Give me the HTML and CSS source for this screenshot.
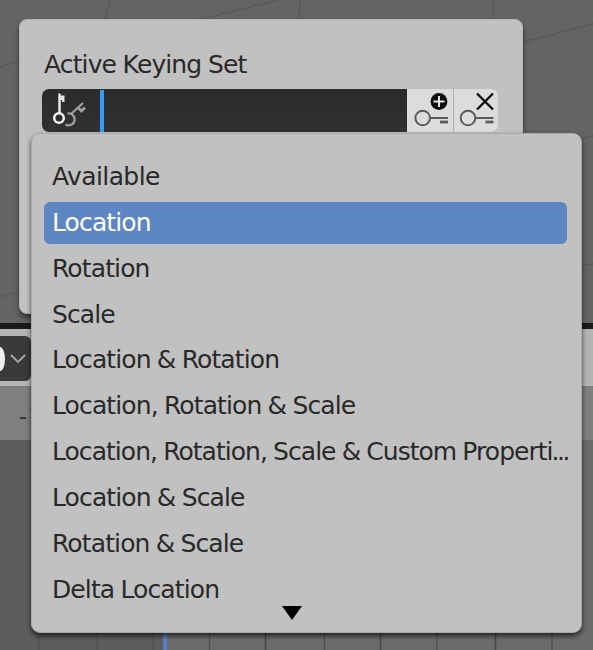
FILE: index.html
```html
<!DOCTYPE html>
<html lang="en">
<head>
<meta charset="utf-8">
<title>Active Keying Set</title>
<link rel="stylesheet" href="styles.css">
</head>
<body>
<div class="editor">
  <div class="viewport">
    <svg width="593" height="323" viewBox="0 0 593 323" fill="none" stroke="#595959" stroke-width="1.3">
      <path d="M110 0L105 20M278 0L198 20M300 0L299 20M493 0V20M0 67L20 61M523 42L593 24M581 139L593 136M581 266L593 264M0 297L20 291"/>
    </svg>
  </div>
  <div class="header">
    <div class="header-field"><span class="toggle"></span>
      <svg class="chevron" width="16" height="12" viewBox="0 0 16 12" fill="none" stroke="#a6a6a6" stroke-width="1.8"><path d="M1 2L8 9L15 2"/></svg>
    </div>
  </div>
  <div class="ruler"><span>-10</span></div>
  <div class="timeline">
    <svg width="593" height="210" viewBox="0 0 593 210">
      <path fill="#5d5d5d" d="M0 0H163V210H0z"/>
      <path stroke="#505050" stroke-width="1.3" d="M38.500 0V210M97 0V210M153.500 0V210M209.500 0V210M324.500 0V210M437 0V210M552 0V210"/>
      <path stroke="#484848" stroke-width="1.5" d="M265.500 0V210M380.500 0V210M495.500 0V210"/>
      <path fill="#5680c2" d="M163 0H167V210H163z"/>
    </svg>
  </div>
</div>

<section class="panel">
  <h1 class="panel-title">Active Keying Set</h1>
  <div class="search-row">
    <div class="search">
      <svg width="38" height="43" viewBox="0 0 38 43" fill="none">
        <path d="M25.500 24.500A6 6 0 1 1 23.500 35.500M29.500 24.500L41 14" stroke="#a0a0a0" stroke-width="2.200"/>
        <path d="M36 18.500L39.500 22L43 18.500" stroke="#a0a0a0" stroke-width="2.800"/>
        <circle cx="17" cy="29" r="4.800" stroke="#f1f1f1" stroke-width="2.500"/>
        <path d="M17.500 24.500V4.500" stroke="#f1f1f1" stroke-width="2.400"/>
        <path d="M18 6.500H22.500V13H20V11H18z" fill="#e4e4e4"/>
      </svg>
      <span class="caret"></span>
    </div>
    <button class="tool" aria-label="Add keying set">
      <svg width="46" height="43" viewBox="0 0 46 43" fill="none">
        <circle cx="32" cy="12.500" r="8.400" fill="#0b0b0b"/><path d="M26.500 12.500H37.500M32 7V18" stroke="#e8e8e8" stroke-width="2"/>
        <g stroke="#5a5a5a" stroke-width="2"><circle cx="15.700" cy="29" r="7.300"/><path d="M23 29H41"/><path d="M33 33H41" stroke-width="2.800"/></g>
      </svg>
    </button>
    <button class="tool tool-last" aria-label="Remove keying set">
      <svg width="45" height="43" viewBox="0 0 45 43" fill="none">
        <path d="M23 4.500L39 20.500M39 4.500L23 20.500" stroke="#111" stroke-width="2.400"/>
        <g stroke="#5a5a5a" stroke-width="2"><circle cx="14" cy="29" r="7.300"/><path d="M21.500 29H39.500"/><path d="M31.500 33H39.500" stroke-width="2.800"/></g>
      </svg>
    </button>
  </div>
</section>

<ul class="menu">
  <li>Available</li>
  <li class="selected">Location</li>
  <li>Rotation</li>
  <li>Scale</li>
  <li>Location &amp; Rotation</li>
  <li>Location, Rotation &amp; Scale</li>
  <li class="long">Location, Rotation, Scale &amp; Custom Properti<span class="dots">...</span></li>
  <li>Location &amp; Scale</li>
  <li>Rotation &amp; Scale</li>
  <li>Delta Location</li>
  <li class="more"><svg width="20" height="14" viewBox="0 0 20 14"><path d="M0 0H20L10 14z"/></svg></li>
</ul>
</body>
</html>
```
FILE: styles.css
```css
* { box-sizing: border-box; }
body {
  margin: 0;
  width: 593px;
  height: 650px;
  overflow: hidden;
  position: relative;
  font-family: "DejaVu Sans", sans-serif;
  font-size: 25px;
  letter-spacing: -0.88px;
  word-spacing: -0.9px;
  color: #292929;
}
svg { display: block; flex: none; }
.editor {
  display: grid;
  grid-template-rows: 323px 63px 54px 210px;
  height: 650px;
}
.viewport { background: #646464; overflow: hidden; }
.header {
  background: #b4b4b4;
  border-top: 6px solid #1a1a1a;
  padding-top: 7px;
}
.header-field {
  display: flex;
  align-items: center;
  gap: 5px;
  width: 31px;
  height: 45px;
  background: #3a3a3a;
  border-radius: 0 6px 6px 0;
}
.toggle {
  flex: none;
  width: 5px;
  height: 24px;
  background: #eee;
  border-radius: 0 5px 5px 0 / 0 12px 12px 0;
}
.ruler {
  background: #7f7f7f;
  padding: 16px 0 0 19px;
  font-size: 22px;
  line-height: 30px;
  letter-spacing: 1px;
}
.timeline { background: #6b6b6b; }
.panel {
  position: absolute;
  left: 19px;
  top: 19px;
  width: 504px;
  height: 295px;
  padding: 29px 24px 0;
  background: #c1c1c1;
  border: 1px solid #b3b3b3;
  border-radius: 8px;
  box-shadow: 0 4px 5px rgba(0, 0, 0, .5);
}
.panel-title {
  margin: 0 0 8px;
  font-size: 25px;
  font-weight: 400;
  line-height: 32px;
  word-spacing: -0.5px;
}
.search-row { display: flex; height: 43px; width: 456px; margin-left: -2px; }
.search {
  display: flex;
  flex: 1;
  align-items: center;
  background: linear-gradient(#2b2b2b, #313131);
  border-radius: 7px 0 0 7px;
}
.search svg { overflow: visible; }
.caret { width: 4px; height: 42px; margin-left: 20px; background: #339df4; }
.tool {
  width: 46px;
  height: 43px;
  padding: 0;
  border: 0;
  background: #dcdcdc;
}
.tool-last { width: 45px; border-left: 1px solid #b0b0b0; border-radius: 0 7px 7px 0; }
.menu {
  position: absolute;
  left: 31px;
  top: 133px;
  width: 551px;
  height: 500px;
  margin: 0;
  padding: 22px 14px 0 12px;
  list-style: none;
  background: #c1c1c1;
  border: 1px solid #a9a9a9;
  border-radius: 9px;
  box-shadow: 0 3px 5px rgba(0, 0, 0, .65);
}
.menu li {
  height: 42px;
  margin-bottom: 3.850px;
  padding-left: 8px;
  line-height: 42px;
  border-radius: 6px;
  white-space: nowrap;
}
.menu .selected { background: #5e86c2; color: #fff; }
.menu .long { letter-spacing: -0.96px; }
.long .dots { margin-left: -1px; letter-spacing: -2.5px; }
.menu li:first-child { letter-spacing: -0.6px; }
.menu .more {
  display: flex;
  justify-content: center;
  height: 14px;
  margin: -8px 0 0;
  padding: 0 28px 0 0;
}
```
